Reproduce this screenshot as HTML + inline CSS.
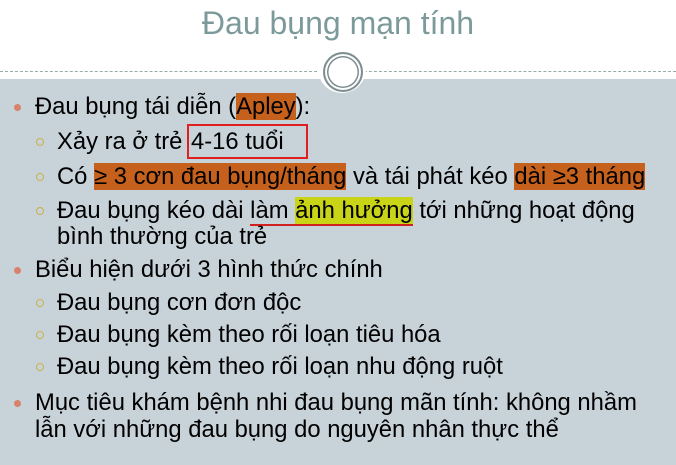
<!DOCTYPE html>
<html><head><meta charset="utf-8"><style>
body{margin:0;width:676px;height:465px;overflow:hidden;background:#fff;font-family:"Liberation Sans",sans-serif;position:relative}
.bg{position:absolute;left:0;top:79px;width:676px;height:386px;background:#c8d2d9}
.title{position:absolute;top:5px;left:0;width:676px;text-align:center;font-size:32px;color:#7d9a9b}
.dot{position:absolute;top:71px;left:0;width:676px;border-top:1px dashed #9aa}
.l{position:absolute;font-size:23.8px;color:#000;white-space:nowrap;line-height:26px}
.b1::before{content:"";position:absolute;left:-21px;top:10px;width:7px;height:7px;border-radius:50%;background:#d9826b}
.b2::before{content:"";position:absolute;left:-21px;top:9px;width:8px;height:8px;border-radius:50%;border:1.5px solid #c8b24a;box-sizing:border-box}
.o{background:#c5611d}
.y{background:#c8d415}
</style></head><body>
<div class="bg"></div>
<div class="title">Đau bụng mạn tính</div>
<div class="dot"></div>
<div style="position:absolute;left:318px;top:45px;width:48px;height:48px;border-radius:50%;background:#fff;"></div>
<div style="position:absolute;left:323px;top:52px;width:36px;height:36px;border-radius:50%;border:2px solid #7e8e90;box-shadow:inset 0 0 0 2px #fff,inset 0 0 0 3.5px #7e8e90"></div>
<div class="l b1" style="left:35px;top:94px">Đau bụng tái diễn (<span class="o">Apley</span>):</div>
<div class="l b2" style="left:57px;top:129px">Xảy ra ở trẻ <span style="outline:2px solid #e02020;padding:2px 22px 2px 2px">4-16 tuổi</span></div>
<div class="l b2" style="left:57px;top:164px">Có <span class="o">≥ 3 cơn đau bụng/tháng</span> và tái phát kéo <span class="o">dài ≥3 tháng</span></div>
<div class="l b2" style="left:57px;top:198px">Đau bụng kéo dài <span style="border-bottom:2px solid #d02020">làm <span class="y">ảnh hưởng</span></span> tới những hoạt động</div>
<div class="l" style="left:57px;top:224px">bình thường của trẻ</div>
<div class="l b1" style="left:35px;top:257px">Biểu hiện dưới 3 hình thức chính</div>
<div class="l b2" style="left:57px;top:290px">Đau bụng cơn đơn độc</div>
<div class="l b2" style="left:57px;top:322px">Đau bụng kèm theo rối loạn tiêu hóa</div>
<div class="l b2" style="left:57px;top:354px">Đau bụng kèm theo rối loạn nhu động ruột</div>
<div class="l b1" style="left:35px;top:390px">Mục tiêu khám bệnh nhi đau bụng mãn tính: không nhầm</div>
<div class="l" style="left:35px;top:417px">lẫn với những đau bụng do nguyên nhân thực thể</div>
</body></html>
